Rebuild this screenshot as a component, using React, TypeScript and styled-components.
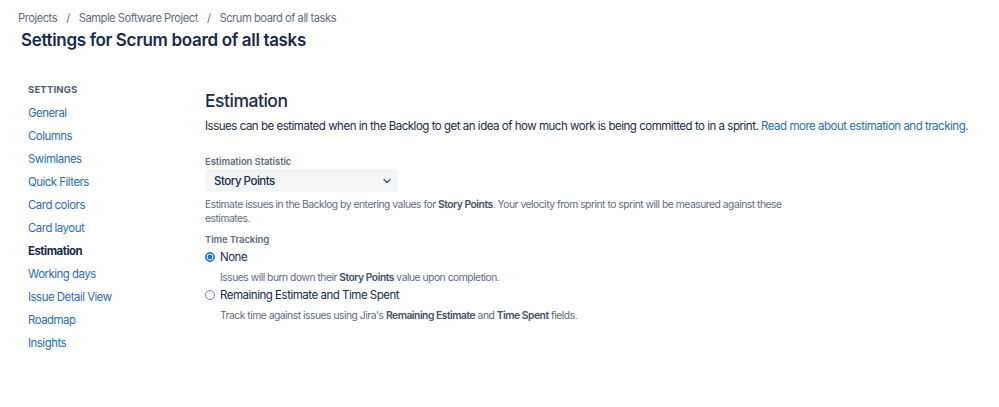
import styled, { createGlobalStyle } from "styled-components";

const GlobalStyle = createGlobalStyle`
  body {
    margin: 0;
    background: #fff;
    font-family: Inter, "Noto Sans", "Liberation Sans", sans-serif;
    color: #172b4d;
    letter-spacing: -0.03em;
  }
`;

const NAV_ITEMS = [
  "General",
  "Columns",
  "Swimlanes",
  "Quick Filters",
  "Card colors",
  "Card layout",
  "Estimation",
  "Working days",
  "Issue Detail View",
  "Roadmap",
  "Insights",
];

const ACTIVE = "Estimation";

const Page = styled.div`
  width: 999px;
  height: 407px;
  box-sizing: border-box;
  padding: 10px 0 0 18px;
`;

const Breadcrumbs = styled.nav`
  display: flex;
  align-items: center;
  gap: 9px;
  font-size: 11.2px;
  line-height: 16px;
  color: #5e6c84;
`;

const Title = styled.h1`
  margin: 2px 0 0 3px;
  font-size: 17px;
  line-height: 24px;
  font-weight: 600;
  color: #172b4d;
  letter-spacing: -0.02em;
`;

const Body = styled.div`
  display: flex;
  margin-top: 31px;
  padding-left: 10px;
`;

const Sidebar = styled.aside`
  width: 177px;
  display: flex;
  flex-direction: column;
`;

const SidebarHeading = styled.div`
  font-size: 9.5px;
  font-weight: 700;
  letter-spacing: 0.02em;
  color: #505f79;
  line-height: 14px;
  margin-bottom: 5px;
`;

const NavItem = styled.a<{ $active?: boolean }>`
  display: block;
  font-size: 11.4px;
  line-height: 23px;
  color: ${(p) => (p.$active ? "#172b4d" : "#2b6cb9")};
  font-weight: ${(p) => (p.$active ? 700 : 400)};
  text-decoration: none;
`;

const Main = styled.main`
  flex: 1;
  padding-top: 7px;
`;

const SectionTitle = styled.h2`
  margin: 0;
  font-size: 17.5px;
  line-height: 22px;
  font-weight: 500;
  color: #172b4d;
`;

const Lead = styled.p`
  margin: 6px 0 0;
  font-size: 11.5px;
  line-height: 16px;
  color: #172b4d;

  a {
    color: #2b6cb9;
    text-decoration: none;
  }
`;

const FieldLabel = styled.div<{ $gap: number }>`
  margin-top: ${(p) => p.$gap}px;
  font-size: 9.5px;
  font-weight: 600;
  line-height: 14px;
  color: #5e6c84;
  letter-spacing: -0.01em;
`;

const Select = styled.div`
  width: 193px;
  height: 23px;
  box-sizing: border-box;
  background: #f4f5f7;
  border-radius: 3px;
  display: flex;
  align-items: center;
  justify-content: space-between;
  padding: 0 5px 0 9px;
  font-size: 11.5px;
  font-weight: 500;
  color: #172b4d;
`;

const Help = styled.p<{ $indent?: boolean }>`
  margin: 5px 0 0;
  padding-left: ${(p) => (p.$indent ? "15px" : "0")};
  max-width: 585px;
  font-size: 10.3px;
  line-height: 14px;
  color: #5e6c84;

  b {
    font-weight: 600;
    color: #42526e;
  }
`;

const RadioRow = styled.label<{ $gap: number }>`
  display: flex;
  align-items: center;
  gap: 5px;
  margin-top: ${(p) => p.$gap}px;
  font-size: 11.5px;
  line-height: 16px;
  color: #172b4d;
`;

const Radio = styled.span<{ $checked?: boolean }>`
  width: 10px;
  height: 10px;
  border-radius: 50%;
  box-sizing: border-box;
  flex: none;
  border: 1px solid ${(p) => (p.$checked ? "#1d6fe0" : "#7a869a")};
  background: ${(p) =>
    p.$checked
      ? "radial-gradient(circle, #1d6fe0 0 2.2px, #fff 2.7px 3.2px, #1d6fe0 3.7px)"
      : "#fff"};
`;

const Chevron = () => (
  <svg width="12" height="12" viewBox="0 0 12 12" fill="none">
    <path d="M3 4.5 6 7.5 9 4.5" stroke="#42526e" strokeWidth="1.3" strokeLinecap="round" strokeLinejoin="round" />
  </svg>
);

export default function App() {
  return (
    <>
      <GlobalStyle />
      <Page>
        <Breadcrumbs>
          <span>Projects</span>
          <span>/</span>
          <span>Sample Software Project</span>
          <span>/</span>
          <span>Scrum board of all tasks</span>
        </Breadcrumbs>
        <Title>Settings for Scrum board of all tasks</Title>
        <Body>
          <Sidebar>
            <SidebarHeading>SETTINGS</SidebarHeading>
            {NAV_ITEMS.map((item) => (
              <NavItem key={item} $active={item === ACTIVE}>
                {item}
              </NavItem>
            ))}
          </Sidebar>
          <Main>
            <SectionTitle>Estimation</SectionTitle>
            <Lead>
              Issues can be estimated when in the Backlog to get an idea of how much work is being
              committed to in a sprint. <a>Read more about estimation and tracking.</a>
            </Lead>
            <FieldLabel $gap={21}>Estimation Statistic</FieldLabel>
            <Select>
              <span>Story Points</span>
              <Chevron />
            </Select>
            <Help>
              Estimate issues in the Backlog by entering values for <b>Story Points</b>. Your
              velocity from sprint to sprint will be measured against these estimates.
            </Help>
            <FieldLabel $gap={8}>Time Tracking</FieldLabel>
            <RadioRow $gap={2}>
              <Radio $checked />
              None
            </RadioRow>
            <Help $indent>
              Issues will burn down their <b>Story Points</b> value upon completion.
            </Help>
            <RadioRow $gap={3}>
              <Radio />
              Remaining Estimate and Time Spent
            </RadioRow>
            <Help $indent>
              Track time against issues using Jira's <b>Remaining Estimate</b> and <b>Time Spent</b>{" "}
              fields.
            </Help>
          </Main>
        </Body>
      </Page>
    </>
  );
}
